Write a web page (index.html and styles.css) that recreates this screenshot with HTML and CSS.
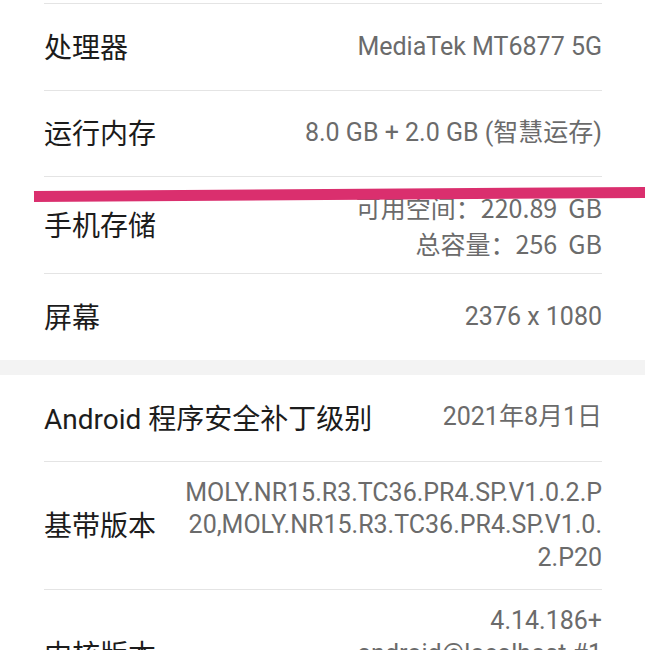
FILE: index.html
```html
<!DOCTYPE html>
<html lang="zh-CN">
<head>
    <meta charset="UTF-8">
    <meta name="viewport" content="width=device-width, initial-scale=1.0">
    <title>关于手机</title>
    <link rel="stylesheet" href="styles.css">
</head>
<body>
    <div class="page">
        <div class="group first">
            <div class="row">
                <div class="label">处理器</div>
                <div class="value">MediaTek MT6877 5G</div>
            </div>
            <div class="row">
                <div class="label">运行内存</div>
                <div class="value">8.0 GB + 2.0 GB (智慧运存)</div>
            </div>
            <div class="row storage">
                <div class="label">手机存储</div>
                <div class="value">可用空间：220.89&nbsp; GB<br>总容量：256&nbsp; GB</div>
            </div>
            <div class="row">
                <div class="label">屏幕</div>
                <div class="value">2376 x 1080</div>
            </div>
        </div>

        <div class="gap"></div>

        <div class="group">
            <div class="row">
                <div class="label">Android 程序安全补丁级别</div>
                <div class="value">2021年8月1日</div>
            </div>
            <div class="row multi">
                <div class="label">基带版本</div>
                <div class="value">MOLY.NR15.R3.TC36.PR4.SP.V1.0.2.P<br>20,MOLY.NR15.R3.TC36.PR4.SP.V1.0.<br>2.P20</div>
            </div>
            <div class="row multi">
                <div class="label">内核版本</div>
                <div class="value">4.14.186+<br>android@localhost #1<br>Thu Aug 12 20:15:36 CST 2021</div>
            </div>
        </div>

        <div class="mark"></div>
    </div>
</body>
</html>
```

FILE: styles.css
```css
body {
    margin: 0;
    padding: 0;
    background-color: #ffffff;
    font-family: Roboto, "Noto Sans CJK SC", sans-serif;
}
.page {
    position: relative;
    width: 645px;
    overflow: hidden;
}
.group {
    padding: 0 43px 0 44px;
}
.group.first {
    padding-top: 3px;
}
.row {
    display: flex;
    justify-content: space-between;
    align-items: center;
    min-height: 53.5px;
    padding: 16px 0;
    border-top: 1px solid #e4e4e4;
}
.group:not(.first) .row:first-child {
    border-top: none;
    min-height: 54px;
}
.label {
    font-family: Roboto, "Noto Sans CJK SC", sans-serif;
    font-size: 28px;
    color: #1c1c1c;
    white-space: nowrap;
    margin-top: -2px;
}
.value {
    font-size: 25px;
    color: #6b6b6b;
    text-align: right;
    line-height: 32.5px;
}
.storage {
    padding: 12.5px 0;
}
.storage .value {
    font-family: "Noto Sans CJK SC", sans-serif;
    line-height: 36px;
    margin-top: -1px;
}
.multi {
    padding: 15px 0;
}
.multi .value {
    padding-left: 20px;
}
.gap {
    height: 15px;
    background-color: #f3f3f3;
}
.mark {
    position: absolute;
    left: 34px;
    top: 191px;
    width: 620px;
    height: 11px;
    background-color: #da2f6e;
    transform: rotate(-0.38deg);
    transform-origin: left center;
}
```
